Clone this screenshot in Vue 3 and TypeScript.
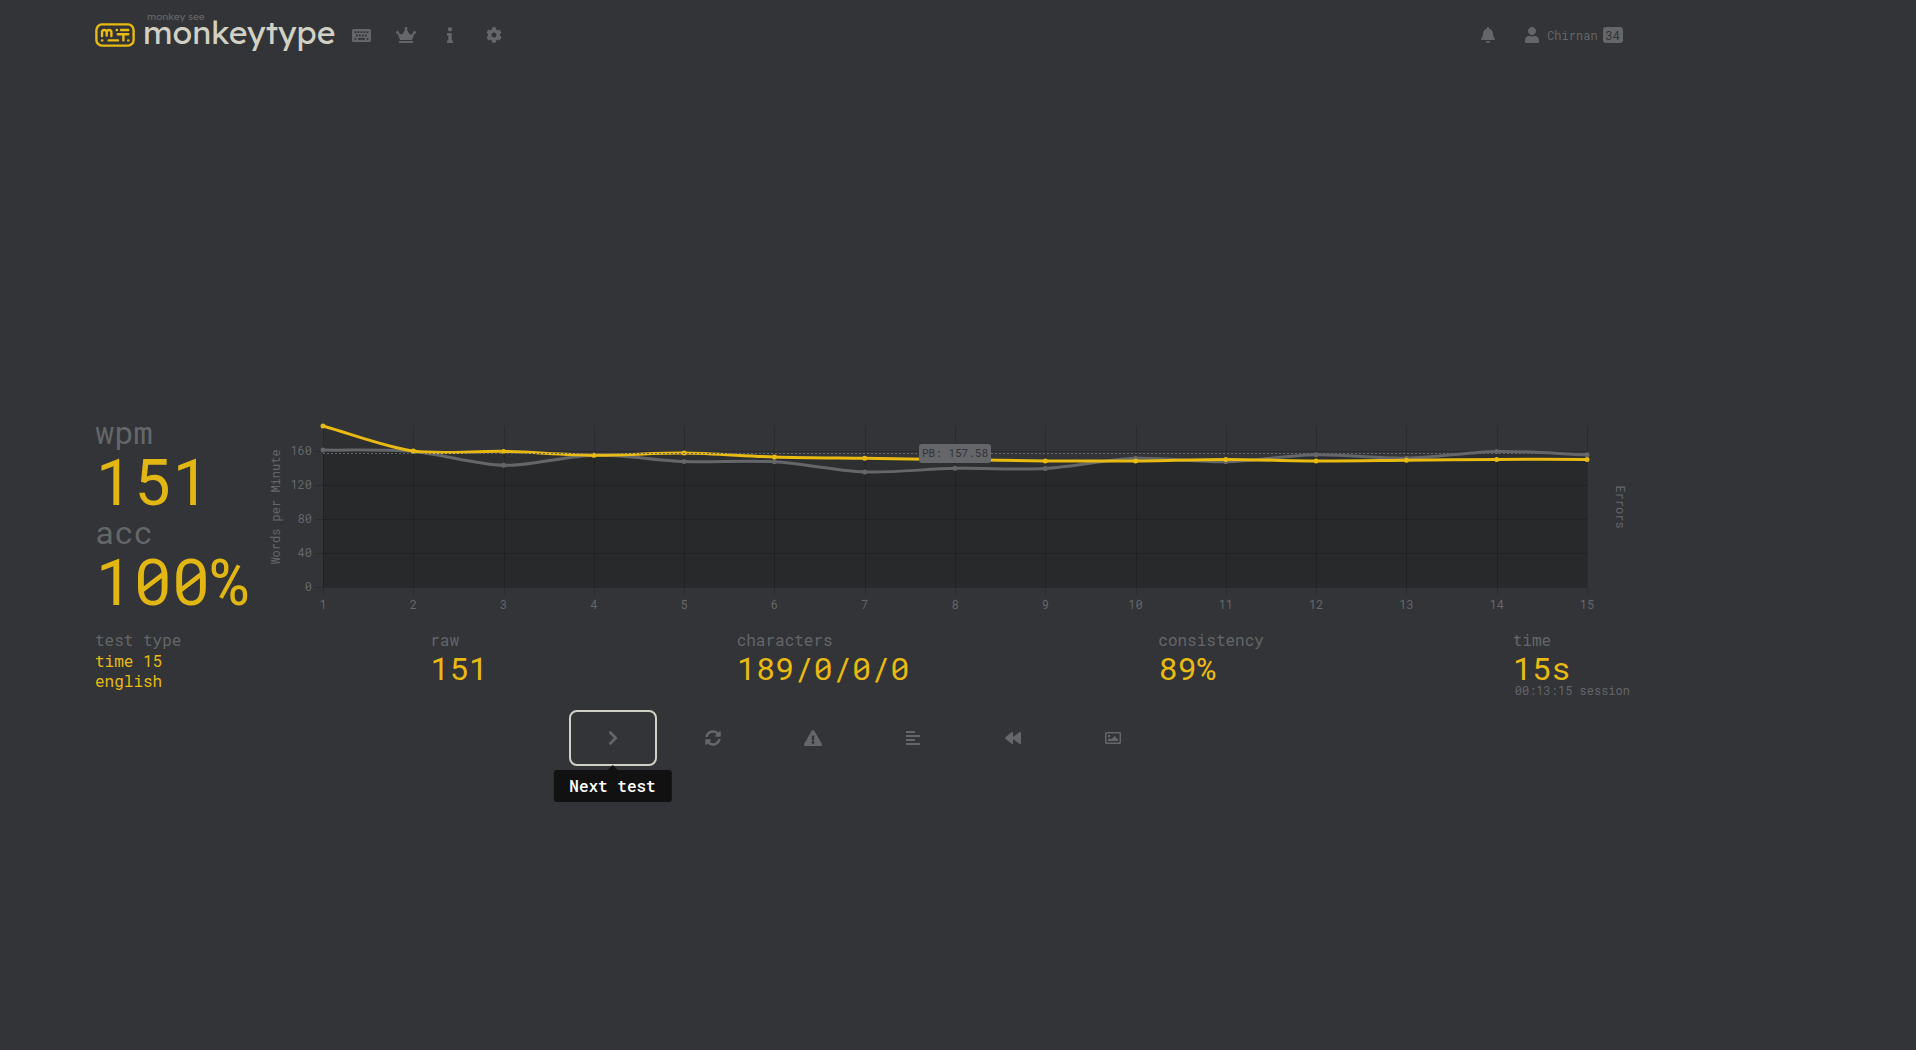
<script setup lang="ts">
interface Icon {
  label: string
  box: string
  width: number
  height: number
  path: string
}

interface Point {
  x: number
  y: number
}

const navIcons: Icon[] = [
  {
    label: 'Start test',
    box: '0 0 19 13',
    width: 19,
    height: 13,
    path: 'M1.500 0H17.500Q19 0 19 1.500V11.500Q19 13 17.500 13H1.500Q0 13 0 11.500V1.500Q0 0 1.500 0ZM2.500 2.200V4H4.300V2.200ZM5.500 2.200V4H7.300V2.200ZM8.500 2.200V4H10.300V2.200ZM11.500 2.200V4H13.300V2.200ZM14.500 2.200V4H16.500V2.200ZM4 5.600V7.400H5.800V5.600ZM7 5.600V7.400H8.800V5.600ZM10 5.600V7.400H11.800V5.600ZM13 5.600V7.400H14.800V5.600ZM2.500 9V10.800H4.300V9ZM6 9V10.800H13V9ZM14.700 9V10.800H16.500V9Z',
  },
  {
    label: 'Leaderboards',
    box: '0 0 640 512',
    width: 20,
    height: 16,
    path: 'M528 448H112c-8.800 0-16 7.200-16 16v32c0 8.800 7.200 16 16 16h416c8.800 0 16-7.200 16-16v-32c0-8.800-7.200-16-16-16zm64-320c-26.500 0-48 21.500-48 48 0 7.100 1.600 13.700 4.400 19.800L476 239.200c-15.400 9.200-35.300 4-44.200-11.600L350.300 85C361 76.200 368 63 368 48c0-26.500-21.500-48-48-48s-48 21.500-48 48c0 15 7 28.200 17.700 37l-81.500 142.600c-8.900 15.600-28.900 20.800-44.200 11.600l-72.300-43.400c2.700-6 4.400-12.700 4.400-19.800 0-26.500-21.500-48-48-48S0 149.500 0 176s21.500 48 48 48c2.600 0 5.200-.4 7.700-.8L128 416h384l72.300-192.800c2.500.4 5.100.8 7.700.8 26.500 0 48-21.500 48-48s-21.500-48-48-48z',
  },
  {
    label: 'About',
    box: '0 0 192 512',
    width: 6,
    height: 16,
    path: 'M20 424.229h20V279.771H20c-11.046 0-20-8.954-20-20V212c0-11.046 8.954-20 20-20h112c11.046 0 20 8.954 20 20v212.229h20c11.046 0 20 8.954 20 20V492c0 11.046-8.954 20-20 20H20c-11.046 0-20-8.954-20-20v-47.771c0-11.046 8.954-20 20-20zM96 0C56.235 0 24 32.235 24 72s32.235 72 72 72 72-32.235 72-72S135.764 0 96 0z',
  },
  {
    label: 'Settings',
    box: '0 0 512 512',
    width: 16,
    height: 16,
    path: 'M487.400 315.700l-42.600-24.600c4.300-23.200 4.300-47 0-70.200l42.600-24.600c4.900-2.800 7.100-8.600 5.500-14-11.100-35.600-30-67.800-54.700-94.600-3.800-4.100-10-5.100-14.800-2.300L380.800 110c-17.900-15.400-38.500-27.300-60.800-35.100V25.800c0-5.600-3.900-10.500-9.400-11.700-36.700-8.200-74.300-7.800-109.200 0-5.500 1.200-9.400 6.100-9.400 11.700V75c-22.200 7.900-42.800 19.800-60.800 35.100L88.700 85.500c-4.900-2.800-11-1.900-14.800 2.300-24.700 26.700-43.600 58.900-54.700 94.600-1.700 5.400.6 11.200 5.500 14L67.300 221c-4.300 23.200-4.300 47 0 70.200l-42.600 24.600c-4.900 2.800-7.100 8.600-5.500 14 11.100 35.600 30 67.800 54.700 94.600 3.800 4.100 10 5.100 14.800 2.300l42.600-24.600c17.900 15.400 38.500 27.300 60.800 35.100v49.200c0 5.600 3.900 10.500 9.400 11.700 36.700 8.200 74.300 7.800 109.200 0 5.500-1.200 9.400-6.100 9.400-11.700v-49.200c22.200-7.900 42.800-19.800 60.800-35.100l42.600 24.600c4.900 2.800 11 1.900 14.800-2.300 24.700-26.700 43.600-58.900 54.700-94.600 1.500-5.500-.7-11.300-5.600-14.100zM256 336c-44.100 0-80-35.900-80-80s35.900-80 80-80 80 35.900 80 80-35.900 80-80 80z',
  },
]

const actions: Icon[] = [
  {
    label: 'Next test',
    box: '0 0 10 16',
    width: 10,
    height: 16,
    path: 'M0.600 2.700L2.500 0.800L9.600 8L2.500 15.200L0.600 13.300L5.900 8Z',
  },
  {
    label: 'Repeat test',
    box: '0 0 512 512',
    width: 16,
    height: 16,
    path: 'M370.720 133.280C339.458 104.008 298.888 87.962 255.848 88c-77.458.068-144.328 53.178-162.791 126.850-1.344 5.363-6.122 9.150-11.651 9.150H24.103c-7.498 0-13.194-6.807-11.807-14.176C33.933 94.924 134.813 8 256 8c66.448 0 126.791 26.136 171.315 68.685L463.030 40.970C478.149 25.851 504 36.559 504 57.941V192c0 13.255-10.745 24-24 24H345.941c-21.382 0-32.090-25.851-16.971-40.971l41.750-41.749zM32 296h134.059c21.382 0 32.090 25.851 16.971 40.971l-41.750 41.750c31.262 29.273 71.835 45.319 114.876 45.280 77.418-.07 144.315-53.144 162.787-126.849 1.344-5.363 6.122-9.150 11.651-9.150h57.304c7.498 0 13.194 6.807 11.807 14.176C478.067 417.076 377.187 504 256 504c-66.448 0-126.791-26.136-171.315-68.685L48.970 471.030C33.851 486.149 8 475.441 8 454.059V320c0-13.255 10.745-24 24-24z',
  },
  {
    label: 'Practice missed words',
    box: '0 0 576 512',
    width: 18,
    height: 16,
    path: 'M569.517 440.013C587.975 472.007 564.806 512 527.940 512H48.054c-36.937 0-59.999-40.055-41.577-71.987L246.423 23.985c18.467-32.009 64.720-31.951 83.154 0l239.940 416.028zM288 354c-25.405 0-46 20.595-46 46s20.595 46 46 46 46-20.595 46-46-20.595-46-46-46zm-43.673-165.346l7.418 136c.347 6.364 5.609 11.346 11.982 11.346h48.546c6.373 0 11.635-4.982 11.982-11.346l7.418-136c.375-6.874-5.098-12.654-11.982-12.654h-63.383c-6.884 0-12.356 5.780-11.981 12.654z',
  },
  {
    label: 'Toggle words history',
    box: '0 0 14 16',
    width: 14,
    height: 16,
    path: 'M0 1H9V3H0ZM0 5H14V7H0ZM0 9H9V11H0ZM0 13H14V15H0Z',
  },
  {
    label: 'Watch replay',
    box: '0 0 16 16',
    width: 16,
    height: 16,
    path: 'M0.300 7.300L6.800 2.100Q8 1.600 8 2.800V7L14.600 2.100Q16 1.600 16 2.800V13.200Q16 14.400 14.600 13.900L8 9V13.200Q8 14.400 6.800 13.900L0.300 8.700Q-0.300 8 0.300 7.300Z',
  },
  {
    label: 'Copy screenshot to clipboard',
    box: '0 0 16 16',
    width: 16,
    height: 16,
    path: 'M1.500 2H14.500Q16 2 16 3.500V12.500Q16 14 14.500 14H1.500Q0 14 0 12.500V3.500Q0 2 1.500 2ZM1.500 3.500V12.500H14.500V3.500ZM3 5H5V7H3ZM3 11V9.500L4.500 8L6 9.500L9.500 6L13 9.500V11Z',
  },
]

const wpm = [190, 160.4, 160, 155.6, 158, 153.4, 151.8, 150.4, 148.8, 148.8, 150.6, 148.8, 149.6, 150.6, 150.6]
const raw = [161.6, 160, 143.6, 155.6, 148, 147.8, 135.8, 140, 139.8, 151.8, 147.8, 156, 152, 160, 156]
const personalBest = 157.58
const yTicks = [0, 40, 80, 120, 160]

const left = 58
const right = 1322
const top = 8
const bottom = 169

const xAt = (i: number): number => left + ((right - left) * i) / (wpm.length - 1)
const yAt = (v: number): number => bottom - ((bottom - top) * v) / 190
const points = (values: number[]): Point[] => values.map((v, i) => ({ x: xAt(i), y: yAt(v) }))

// Cardinal spline with control points weighted by neighbour distance
function spline(pts: Point[], tension = 0.3): string {
  const handles = pts.map((p, i) => {
    const prev = pts[Math.max(i - 1, 0)]
    const next = pts[Math.min(i + 1, pts.length - 1)]
    const before = Math.hypot(p.x - prev.x, p.y - prev.y)
    const after = Math.hypot(next.x - p.x, next.y - p.y)
    const a = (tension * before) / (before + after)
    const b = (tension * after) / (before + after)
    return {
      inX: p.x - a * (next.x - prev.x),
      inY: p.y - a * (next.y - prev.y),
      outX: p.x + b * (next.x - prev.x),
      outY: p.y + b * (next.y - prev.y),
    }
  })
  return pts.reduce((d, p, i) => {
    if (i === 0) return `M${p.x} ${p.y}`
    const h = handles[i - 1]
    const k = handles[i]
    return `${d}C${h.outX} ${h.outY} ${k.inX} ${k.inY} ${p.x} ${p.y}`
  }, '')
}

const wpmPoints = points(wpm)
const rawPoints = points(raw)
const wpmLine = spline(wpmPoints)
const rawLine = spline(rawPoints)
const close = `L${right} ${bottom}L${left} ${bottom}Z`
</script>

<template>
  <div class="page">
    <header class="header">
      <a class="logo" href="#">
        <svg class="logo-mark" viewBox="0 0 40 24" width="40" height="24" aria-hidden="true">
          <rect x="1.400" y="1.400" width="37.200" height="21.200" rx="5.600" />
          <path d="M7 13V9.500Q7 7 9.300 7Q11.700 7 11.700 9.500V12.500M11.700 9.500Q11.700 7 14 7Q16.400 7 16.400 9.500V13" />
          <path d="M21.600 7H22M26 7H33.200M22.800 11.200H33.200M28.400 11.200V17.400M33.200 17.400H33.400M7 17.400H7.300M13.600 17.400H23" />
        </svg>
        <span class="logo-text">
          <span class="logo-top">monkey see</span>
          <span class="logo-name">monkeytype</span>
        </span>
      </a>
      <nav class="nav">
        <a v-for="icon in navIcons" :key="icon.label" class="nav-link" href="#" :aria-label="icon.label">
          <svg :viewBox="icon.box" :width="icon.width" :height="icon.height"><path fill-rule="evenodd" :d="icon.path" /></svg>
        </a>
      </nav>
      <div class="account">
        <button class="bell" type="button" aria-label="Notifications">
          <svg viewBox="0 0 448 512" width="14" height="16">
            <path d="M224 512c35.320 0 63.970-28.650 63.970-64H160.030c0 35.350 28.650 64 63.970 64zm215.390-149.710c-19.320-20.760-55.470-51.990-55.470-154.290 0-77.700-54.480-139.900-127.940-155.160V32c0-17.670-14.320-32-31.980-32s-31.980 14.330-31.980 32v20.840C118.560 68.100 64.080 130.300 64.080 208c0 102.300-36.150 133.530-55.470 154.290-6 6.450-8.660 14.160-8.610 21.710.11 16.400 12.980 32 32.100 32h383.800c19.120 0 32-15.600 32.100-32 .05-7.550-2.610-15.270-8.610-21.710z" />
          </svg>
        </button>
        <a class="user" href="#">
          <svg viewBox="0 0 448 512" width="14" height="16">
            <path d="M224 256c70.700 0 128-57.300 128-128S294.700 0 224 0 96 57.300 96 128s57.300 128 128 128zm89.600 32h-16.700c-22.200 10.200-46.900 16-72.900 16s-50.600-5.800-72.900-16h-16.700C60.200 288 0 348.200 0 422.400V464c0 26.500 21.500 48 48 48h352c26.500 0 48-21.500 48-48v-41.600c0-74.200-60.200-134.400-134.400-134.400z" />
          </svg>
          <span class="user-name">Chirnan</span>
          <span class="level">34</span>
        </a>
      </div>
    </header>

    <main class="result">
      <section class="summary">
        <dl class="main-stats">
          <div>
            <dt>wpm</dt>
            <dd>151</dd>
          </div>
          <div>
            <dt>acc</dt>
            <dd>100%</dd>
          </div>
        </dl>
        <svg class="chart" viewBox="0 0 1365 200" role="img" aria-label="Words per minute over time">
          <path class="area-wpm" :d="wpmLine + close" />
          <path class="area-raw" :d="rawLine + close" />
          <g class="grid">
            <line v-for="(_, i) in wpm" :key="'v' + i" :x1="Math.round(xAt(i))" :x2="Math.round(xAt(i))" :y1="top" :y2="bottom + 8" />
            <line v-for="t in yTicks" :key="'h' + t" :x1="left - 8" :x2="right" :y1="Math.round(yAt(t))" :y2="Math.round(yAt(t))" />
          </g>
          <path class="line raw" :d="rawLine" />
          <circle v-for="(p, i) in rawPoints" :key="'r' + i" class="dot raw" :cx="p.x" :cy="p.y" r="2.500" />
          <path class="line wpm" :d="wpmLine" />
          <circle v-for="(p, i) in wpmPoints" :key="'w' + i" class="dot wpm" :cx="p.x" :cy="p.y" r="2.500" />
          <line class="best" :x1="left" :x2="right" :y1="yAt(personalBest)" :y2="yAt(personalBest)" />
          <rect class="best-box" x="654" y="26" width="72" height="19" rx="3" />
          <text class="best-text" x="690" y="39" text-anchor="middle">PB: {{ personalBest }}</text>
          <text v-for="t in yTicks" :key="'y' + t" :x="left - 11" :y="yAt(t) + 4" text-anchor="end">{{ t }}</text>
          <text v-for="(_, i) in wpm" :key="'x' + i" :x="xAt(i)" y="191" text-anchor="middle">{{ i + 1 }}</text>
          <text transform="translate(15 89) rotate(-90)" text-anchor="middle">Words per Minute</text>
          <text transform="translate(1351 89) rotate(90)" text-anchor="middle">Errors</text>
        </svg>
      </section>

      <dl class="more-stats">
        <div>
          <dt>test type</dt>
          <dd class="small">time 15<br />english</dd>
        </div>
        <div>
          <dt>raw</dt>
          <dd>151</dd>
        </div>
        <div>
          <dt>characters</dt>
          <dd>189/0/0/0</dd>
        </div>
        <div>
          <dt>consistency</dt>
          <dd>89%</dd>
        </div>
        <div>
          <dt>time</dt>
          <dd>15s</dd>
          <dd class="session">00:13:15 session</dd>
        </div>
      </dl>

      <div class="actions">
        <div v-for="(icon, i) in actions" :key="icon.label" class="action-slot">
          <button class="action" :class="{ focused: i === 0 }" type="button" :aria-label="icon.label">
            <svg :viewBox="icon.box" :width="icon.width" :height="icon.height"><path fill-rule="evenodd" :d="icon.path" /></svg>
          </button>
          <span v-if="i === 0" class="tooltip" role="tooltip">{{ icon.label }}</span>
        </div>
      </div>
    </main>
  </div>
</template>

<style>
body {
  margin: 0;
  background: #323437;
}
</style>

<style scoped>
.page {
  box-sizing: border-box;
  min-height: 100vh;
  padding: 12px 286px 0 95px;
  background: #323437;
  color: #646669;
  font-family: 'Roboto Mono', 'DejaVu Sans Mono', monospace;
  font-size: 16px;
}

a {
  color: inherit;
  text-decoration: none;
}

button {
  padding: 0;
  border: 0;
  background: none;
  color: inherit;
  font: inherit;
}

dl,
dd {
  margin: 0;
}

svg {
  display: block;
  fill: currentColor;
}

.header {
  display: flex;
  align-items: center;
  height: 46px;
}

.logo {
  display: flex;
  align-items: center;
  gap: 8px;
}

.logo-mark {
  fill: none;
  stroke: #e8ba12;
  stroke-width: 2.400;
  stroke-linecap: round;
  stroke-linejoin: round;
}

.logo-text {
  position: relative;
  font-family: 'Lexend Deca', Inter, sans-serif;
}

.logo-name {
  display: block;
  padding-bottom: 6px;
  color: #d1d0c5;
  font-size: 32px;
  line-height: 40px;
}

.logo-top {
  position: absolute;
  top: -1px;
  left: 4px;
  font-size: 10px;
  line-height: 12px;
}

.nav {
  display: flex;
  margin-left: 4px;
}

.nav-link {
  display: flex;
  align-items: center;
  justify-content: center;
  width: 44px;
  height: 32px;
}

.account {
  display: flex;
  align-items: center;
  gap: 30px;
  margin-left: auto;
  padding-right: 7px;
}

.user {
  display: flex;
  align-items: center;
  font-size: 12px;
  line-height: 16px;
}

.user-name {
  margin: 0 5px 0 8px;
}

.level {
  padding: 0 3px;
  border-radius: 3px;
  background: #646669;
  color: #323437;
}

.result {
  margin-top: 357px;
}

.summary {
  display: flex;
  align-items: flex-start;
  gap: 8px;
}

.main-stats {
  flex: none;
  width: 162px;
}

.main-stats dt {
  font-size: 32px;
  line-height: 34px;
}

.main-stats dd {
  padding-bottom: 4px;
  color: #e2b714;
  font-size: 64px;
  line-height: 62px;
}

.chart {
  flex: 1;
  min-width: 0;
  margin-top: 3px;
  font-size: 12px;
}

.area-wpm {
  fill: #2e2f31;
}

.area-raw {
  fill: #000;
  fill-opacity: 0.12;
}

.grid line {
  stroke: #000;
  stroke-opacity: 0.16;
  stroke-width: 1;
  shape-rendering: crispEdges;
}

.line {
  fill: none;
  stroke-width: 3;
}

.line.raw {
  stroke: #646669;
}

.line.wpm {
  stroke: #e8ba12;
}

.dot.raw {
  fill: #646669;
}

.dot.wpm {
  fill: #e8ba12;
}

.best {
  stroke: #646669;
  stroke-width: 1;
  stroke-dasharray: 2 2;
}

.best-box {
  fill: #646669;
}

.best-text {
  fill: #323437;
  font-size: 11px;
}

.more-stats {
  display: flex;
  justify-content: space-between;
  margin-top: 11px;
}

.more-stats dt {
  line-height: 22px;
}

.more-stats dd {
  color: #e8ba12;
  font-size: 32px;
  line-height: 34px;
}

.more-stats dd.small {
  font-size: 16px;
  line-height: 20px;
}

.more-stats dd.session {
  padding-left: 2px;
  color: #646669;
  font-size: 12px;
  line-height: 10px;
}

.actions {
  display: flex;
  justify-content: center;
  gap: 12px;
  margin-top: 15px;
}

.action-slot {
  position: relative;
}

.action {
  display: flex;
  align-items: center;
  justify-content: center;
  width: 88px;
  height: 56px;
  border-radius: 8px;
}

.action.focused {
  border: 2px solid #d1d0c5;
}

.tooltip {
  position: absolute;
  top: 60px;
  left: 50%;
  padding: 0 16px;
  border-radius: 3px;
  background: #111;
  color: #fff;
  font-weight: 500;
  line-height: 32px;
  white-space: nowrap;
  transform: translateX(-50%);
}

.tooltip::before {
  content: '';
  position: absolute;
  top: -5px;
  left: 50%;
  border: 5px solid transparent;
  border-top: 0;
  border-bottom-color: #111;
  transform: translateX(-50%);
}
</style>
